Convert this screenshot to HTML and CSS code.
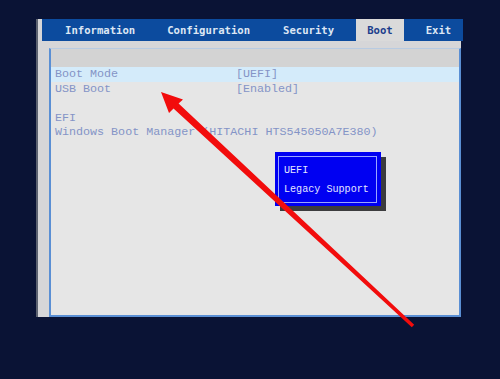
FILE: index.html
```html
<!DOCTYPE html>
<html lang="en">
<head>
  <meta charset="UTF-8">
  <title>Setup - Boot</title>
  <link rel="stylesheet" href="styles.css">
</head>
<body>
  <div class="janela">
    <div class="abas">
      <div class="aba">Information</div>
      <div class="aba">Configuration</div>
      <div class="aba">Security</div>
      <div class="aba ativa">Boot</div>
      <div class="aba">Exit</div>
    </div>
    <div class="painel">
      <div class="cabecalho"></div>
      <div class="linha selecionada"><span class="rotulo">Boot Mode</span><span>[UEFI]</span></div>
      <div class="linha"><span class="rotulo">USB Boot</span><span>[Enabled]</span></div>
      <div class="linha"></div>
      <div class="linha"><span>EFI</span></div>
      <div class="linha"><span>Windows Boot Manager (HITACHI HTS545050A7E380)</span></div>

      <div class="opcoes">
        <div class="opcoes-borda">
          <div class="opcao">UEFI</div>
          <div class="opcao">Legacy Support</div>
        </div>
      </div>
    </div>
  </div>

  <svg class="seta" width="500" height="379" viewBox="0 0 500 379">
    <polygon points="161,92 183,99.5 178.6,103.4 414.2,324.8 411.8,327.2 173.5,108.6 169,113" fill="#f20c0c"/>
  </svg>
</body>
</html>
```

FILE: styles.css
```css
body {
  margin: 0;
  width: 500px;
  height: 379px;
  overflow: hidden;
  position: relative;
  background-color: #0a1335;
}

.janela {
  margin: 19px 0 0 36px;
  width: 423px;
  height: 298px;
  display: flex;
  flex-direction: column;
  background-color: #d6d6d8;
  border-left: 2px solid #5c6270;
}

.abas {
  display: flex;
  gap: 11px;
  height: 22px;
  align-items: center;
  margin-left: 4px;
  margin-right: -2px;
  padding-left: 12px;
  background-color: #0c4b9e;
  font-family: "DejaVu Sans Mono", monospace;
  font-weight: bold;
  font-size: 10.6px;
  color: #dce6f4;
}

.aba {
  padding: 0 11px;
  height: 22px;
  line-height: 22px;
}

.aba:nth-child(2) {
  margin-left: -1px;
}

.aba.ativa {
  background-color: #dadada;
  color: #1c3f8c;
}

.painel {
  position: relative;
  flex: 1;
  margin: 7px 0 0 11px;
  background-color: #e6e6e6;
  border: 2px solid #5a8fd4;
  border-top: 1px solid #b8cbe2;
  font-family: "Liberation Mono", monospace;
  font-size: 11.7px;
  color: #8494c6;
}

.cabecalho {
  height: 18px;
  background-color: #d3d3d3;
}

.linha {
  display: flex;
  height: 14.5px;
  line-height: 14.5px;
  padding-left: 4px;
  white-space: nowrap;
}

.linha.selecionada {
  background-color: #d4ebfa;
}

.rotulo {
  width: 181px;
}

.opcoes {
  position: absolute;
  left: 224px;
  top: 103px;
  width: 106px;
  height: 54px;
  box-sizing: border-box;
  padding: 4px 4px 3px 3px;
  background-color: #0000f2;
  box-shadow: 5px 5px 0 #3c3c3e;
}

.opcoes-borda {
  height: 100%;
  box-sizing: border-box;
  border: 1px solid #9aa6ff;
  padding: 4px 0 0 5px;
  font-size: 10.1px;
  color: #e4e6ff;
}

.opcao {
  height: 19px;
  line-height: 19px;
}

.seta {
  position: absolute;
  left: 0;
  top: 0;
}
```
